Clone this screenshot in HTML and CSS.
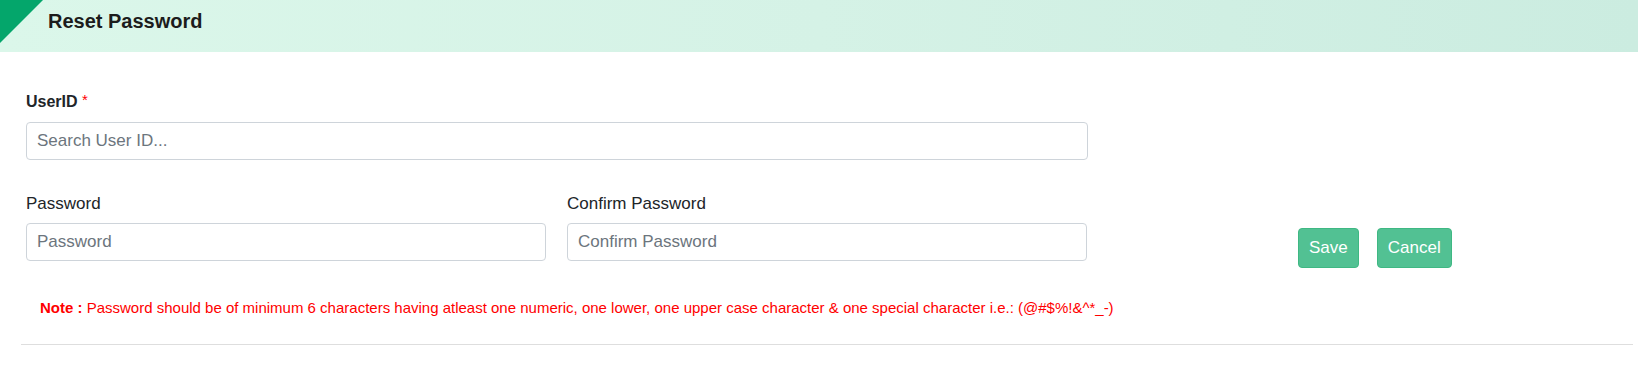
FILE: index.html
```html
<!DOCTYPE html>
<html lang="en">
<head>
<meta charset="utf-8">
<title>Reset Password</title>
<link rel="stylesheet" href="styles.css">
</head>
<body>
<header class="page-header">
  <span class="corner"></span>
  <h1 class="page-title">Reset Password</h1>
</header>
<main class="form-area">
  <div class="field field-wide">
    <label class="label label-strong" for="uid">UserID <span class="req">*</span></label>
    <input class="input" id="uid" type="text" placeholder="Search User ID...">
  </div>
  <div class="row">
    <div class="field field-half">
      <label class="label" for="pw">Password</label>
      <input class="input" id="pw" type="password" placeholder="Password">
    </div>
    <div class="field field-half">
      <label class="label" for="cpw">Confirm Password</label>
      <input class="input" id="cpw" type="password" placeholder="Confirm Password">
    </div>
    <div class="actions">
      <button class="btn" type="button">Save</button>
      <button class="btn" type="button">Cancel</button>
    </div>
  </div>
  <p class="note"><b>Note :</b> Password should be of minimum 6 characters having atleast one numeric, one lower, one upper case character &amp; one special character i.e.: (@#$%!&amp;^*_-)</p>
</main>
<hr class="divider">
</body>
</html>
```
FILE: styles.css
```css
* { box-sizing: border-box; }

body {
  margin: 0;
  background: #ffffff;
  font-family: "Liberation Sans", Arial, sans-serif;
  color: #212529;
}

.page-header {
  position: relative;
  height: 52px;
  display: flex;
  align-items: flex-start;
  padding: 9px 0 0 48px;
  background: linear-gradient(90deg, #dbf7ea 0%, #d5f2e6 50%, #cbece0 100%);
  overflow: hidden;
}

.corner {
  position: absolute;
  left: 0;
  top: 0;
  width: 46px;
  height: 46px;
  background: #04a66b;
  clip-path: polygon(0 0, 43px 0, 0 43px);
  filter: drop-shadow(2px 2px 2px rgba(0, 0, 0, 0.35));
}

.page-title {
  margin: 0;
  font-size: 20px;
  font-weight: bold;
  color: #1c1c1c;
  line-height: 24px;
}

.form-area {
  padding: 36px 0 0 26px;
}

.field {
  display: flex;
  flex-direction: column;
}

.field-wide {
  width: 1062px;
}

.field-half {
  width: 520px;
}

.label {
  font-size: 17px;
  line-height: 24px;
  color: #212529;
  margin-bottom: 7px;
}

.label-strong {
  font-size: 16px;
  font-weight: bold;
  margin-bottom: 8px;
}

.req {
  color: #ff0000;
  font-weight: normal;
  font-size: 15px;
  vertical-align: 2px;
}

.input {
  height: 38px;
  width: 100%;
  padding: 0 10px;
  border: 1px solid #ced4da;
  border-radius: 4px;
  font-family: "Liberation Sans", Arial, sans-serif;
  font-size: 17px;
  color: #495057;
  background: #ffffff;
}

.input::placeholder {
  color: #6c757d;
}

.row {
  display: flex;
  align-items: flex-start;
  gap: 21px;
  margin-top: 32px;
}

.actions {
  display: flex;
  gap: 18px;
  margin-top: 36px;
  margin-left: 190px;
}

.btn {
  height: 40px;
  padding: 0 10px;
  border: 1px solid #3fb883;
  border-radius: 4px;
  background: #52c193;
  color: #ffffff;
  font-family: "Liberation Sans", Arial, sans-serif;
  font-size: 17px;
}

.note {
  margin: 30px 0 0 14px;
  font-size: 15px;
  line-height: 20px;
  color: #ff0000;
}

.divider {
  margin: 26px 5px 0 21px;
  border: 0;
  border-top: 1px solid #dedede;
}
```
